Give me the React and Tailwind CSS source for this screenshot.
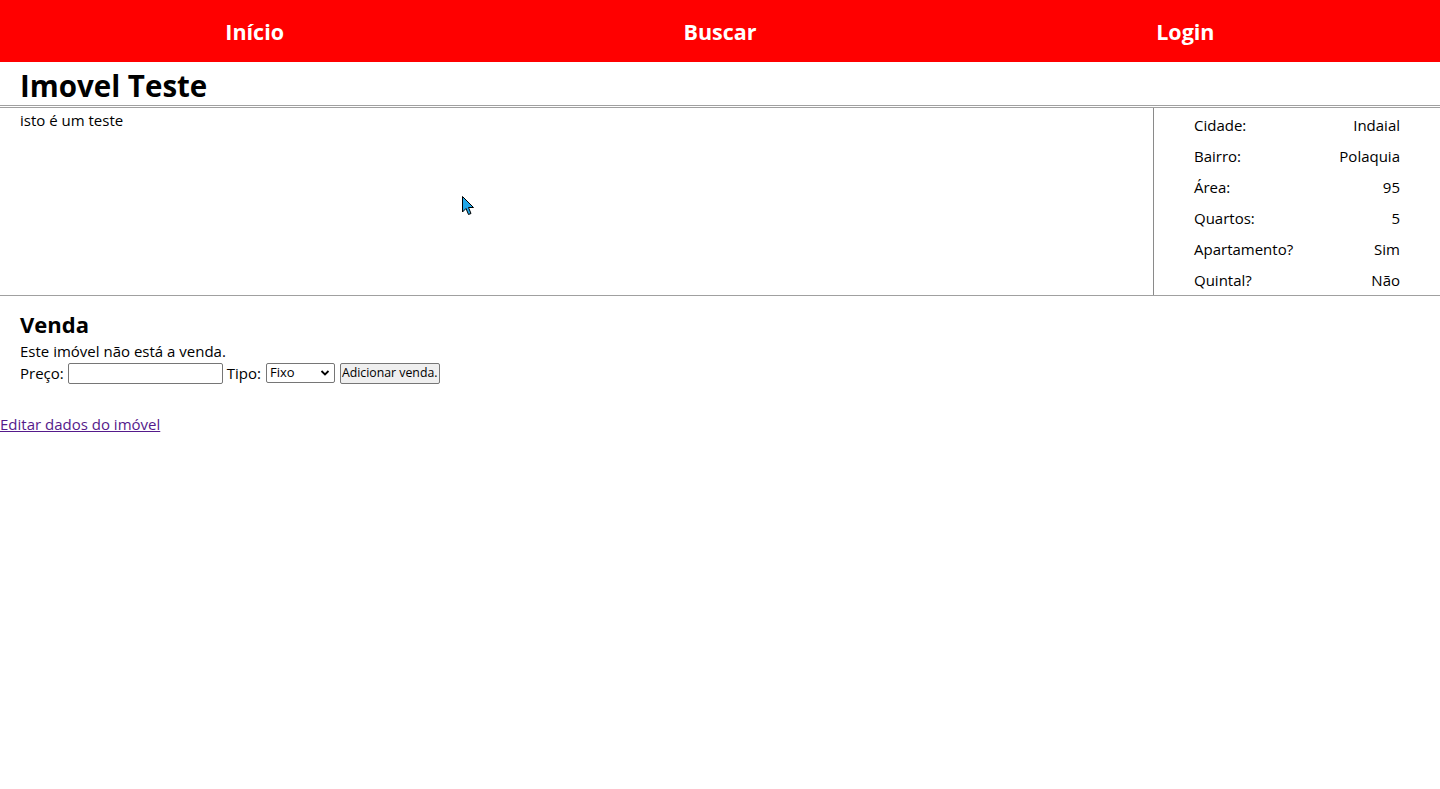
import React from "react";

const rows = [
  ["Cidade:", "Indaial"],
  ["Bairro:", "Polaquia"],
  ["Área:", "95"],
  ["Quartos:", "5"],
  ["Apartamento?", "Sim"],
  ["Quintal?", "Não"],
];

export default function App() {
  return (
    <div className="relative min-h-[789px] bg-white text-black text-[15px] font-['Segoe_UI','Open_Sans',sans-serif]">
      <nav className="flex h-[62px] items-center bg-[#ff0000] px-[22px]">
        <div className="flex-1 pt-[2px] text-center text-[21.5px] font-bold text-white">Início</div>
        <div className="flex-1 pt-[2px] text-center text-[21.5px] font-bold text-white">Buscar</div>
        <div className="flex-1 pt-[2px] text-center text-[21.5px] font-bold text-white">Login</div>
      </nav>
      <h1 className="h-[43px] px-[20px] pt-[4px] text-[29.5px] font-bold leading-[39px]">Imovel Teste</h1>
      <div className="h-[3px] border-y border-[#a0a0a0]" />
      <div className="flex h-[188px] border-b border-[#a0a0a0]">
        <div className="flex-1 pl-[20px] leading-[25px]">isto é um teste</div>
        <div className="w-[287px] border-l border-[#8a8a8a] pl-[40px] pr-[40px] pt-[2px]">
          {rows.map(([k, v]) => (
            <div key={k} className="flex h-[31px] items-center justify-between">
              <span>{k}</span>
              <span>{v}</span>
            </div>
          ))}
        </div>
      </div>
      <div className="px-[20px] pt-[12px]">
        <h2 className="text-[22px] font-bold leading-[32px]">Venda</h2>
        <div className="leading-[22px]">Este imóvel não está a venda.</div>
        <div className="flex h-[22px] items-center">
          <span>Preço:</span>
          <input className="ml-[4px] h-[21px] w-[155px] rounded-[2px] border border-[#767676] bg-white" />
          <span className="ml-[4px]">Tipo:</span>
          <div className="relative ml-[5px] flex h-[20px] w-[69px] items-center rounded-[2px] border border-[#767676] bg-white pl-[3px] text-[13px]">
            <span>Fixo</span>
            <svg className="absolute right-[4px] top-[5px]" width="10" height="8" viewBox="0 0 10 8">
              <path d="M1.5 2 L5 5.5 L8.5 2" fill="none" stroke="#000" strokeWidth="1.8" />
            </svg>
          </div>
          <button className="ml-[5px] h-[21px] rounded-[2px] border border-[#767676] bg-[#efefef] px-[1px] text-[12.3px] leading-[18px]">
            Adicionar venda.
          </button>
        </div>
      </div>
      <a href="#" className="mt-[29px] block w-fit leading-[22px] text-[#551a8b] underline">Editar dados do imóvel</a>
      <svg className="absolute left-[462px] top-[196px]" width="14" height="21" viewBox="0 0 14 21">
        <path d="M0.5 0.5 L0.5 16 L4 12.5 L6.5 18.5 L9 17.5 L6.5 11.5 L11.5 11.5 Z" fill="#1fa6e8" stroke="#000" strokeWidth="1" />
      </svg>
    </div>
  );
}
